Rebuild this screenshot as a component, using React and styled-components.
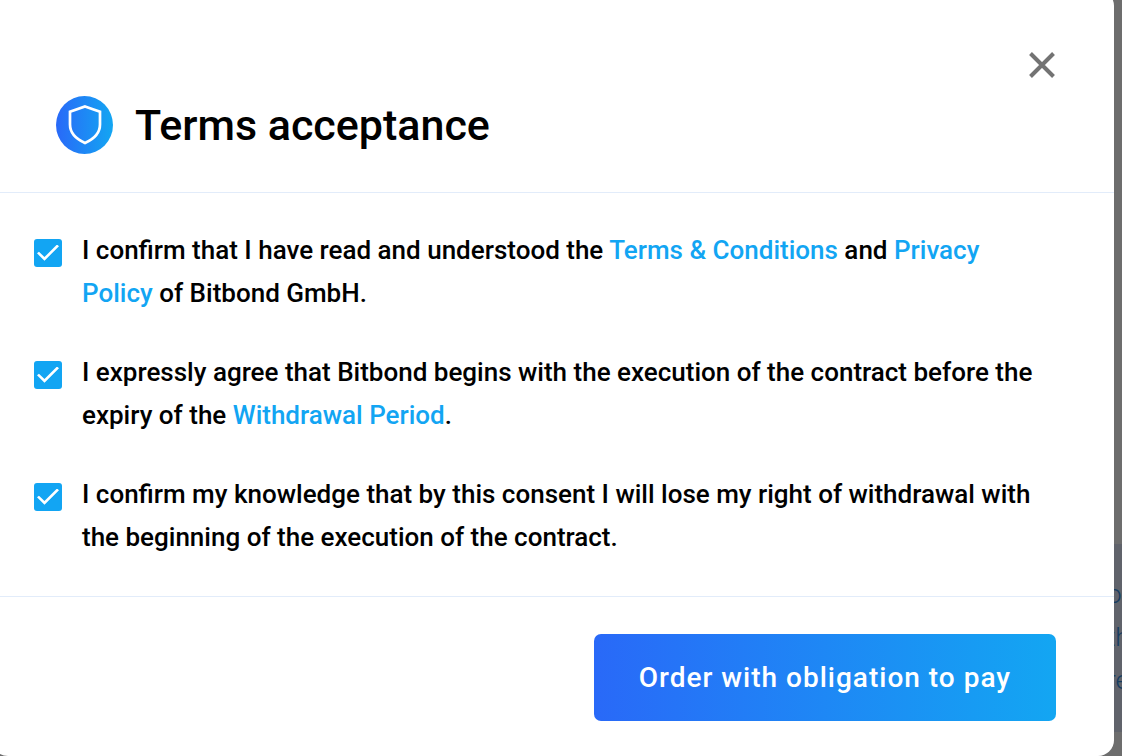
import React from "react";
import styled, { createGlobalStyle } from "styled-components";

const GlobalStyle = createGlobalStyle`
  *, *::before, *::after { box-sizing: border-box; }
  body {
    margin: 0;
    overflow: hidden;
    background: #6d6d6d;
    font-family: Roboto, "Liberation Sans", sans-serif;
  }
`;

const Page = styled.div`
  display: flex;
  min-height: 100vh;
  overflow: hidden;
`;

const Dialog = styled.section`
  position: relative;
  z-index: 1;
  flex: 1;
  display: flex;
  flex-direction: column;
  margin: -10px 0 0 -8px;
  background: #fff;
  border-radius: 16px;
  color: #000;
`;

const Header = styled.header`
  display: flex;
  flex-direction: column;
  padding: 57px 54px 38px 64px;
  border-bottom: 1px solid #e2ecfa;
`;

const CloseButton = styled.button`
  align-self: flex-end;
  display: flex;
  padding: 4px;
  border: 0;
  background: none;
  color: #737373;
  cursor: pointer;
`;

const TitleRow = styled.div`
  display: flex;
  align-items: center;
  gap: 22px;
  margin-top: 13px;
`;

const Badge = styled.span`
  display: flex;
  align-items: center;
  justify-content: center;
  width: 57px;
  height: 58px;
  border-radius: 50%;
  background: linear-gradient(90deg, #2969f8, #13a6f2);
`;

const Title = styled.h1`
  margin: 0;
  font-size: 43px;
  line-height: 58px;
  font-weight: 500;
`;

const Terms = styled.div`
  display: flex;
  flex-direction: column;
  gap: 36px;
  padding: 36px 80px 37px 42px;
`;

const Term = styled.label`
  display: flex;
  align-items: flex-start;
  gap: 20px;
  font-size: 26px;
  line-height: 43px;
  font-weight: 500;
`;

const Checkbox = styled.input`
  appearance: none;
  flex: none;
  width: 28px;
  height: 28px;
  margin: 10px 0 0;
  border-radius: 3px;
  background: #12a5f3;
  display: grid;
  place-items: center;
  cursor: pointer;

  &:checked::before {
    content: "";
    width: 22px;
    height: 17px;
    background: #fff;
    clip-path: polygon(0 52%, 9% 42%, 34% 74%, 91% 0, 100% 11%, 34% 95%);
  }
`;

const Link = styled.a`
  color: #12a5f3;
  text-decoration: none;
`;

const Footer = styled.footer`
  display: flex;
  justify-content: flex-end;
  padding: 37px 58px 35px;
  border-top: 1px solid #e2ecfa;
`;

const OrderButton = styled.button`
  height: 87px;
  padding: 0 45px;
  border: 0;
  border-radius: 7px;
  background: linear-gradient(90deg, #2969f8, #13a6f2);
  color: #fff;
  font: 500 28px/43px Roboto, "Liberation Sans", sans-serif;
  letter-spacing: 1px;
  cursor: pointer;
`;

const Backdrop = styled.aside`
  flex: none;
  width: 24px;
  margin-left: -16px;
  display: flex;
  flex-direction: column;
  justify-content: flex-end;
  overflow: hidden;
  padding-bottom: 24px;
`;

const BackdropPanel = styled.div`
  height: 188px;
  padding: 29px 0 0 9px;
  background: #60636b;
  color: #163c60;
  font-size: 26px;
  line-height: 43px;
  font-weight: 300;
`;

const BackdropLine = styled.div`
  white-space: nowrap;
`;

function ShieldIcon() {
  return (
    <svg width="34" height="40" viewBox="0 0 34 40" fill="none" aria-hidden="true">
      <path
        d="M17 1.500 32 6.800V19.500C32 27.500 26 34 17 38C8 34 2 27.500 2 19.500V6.800Z"
        stroke="#fff"
        strokeWidth="2.700"
      />
    </svg>
  );
}

function CloseIcon() {
  return (
    <svg width="28" height="28" viewBox="0 0 28 28" aria-hidden="true">
      <path d="M2.500 2.500 25.500 25.500M25.500 2.500 2.500 25.500" stroke="currentColor" strokeWidth="4" />
    </svg>
  );
}

export default function App() {
  return (
    <>
      <GlobalStyle />
      <Page>
        <Dialog role="dialog" aria-labelledby="dialog-title">
          <Header>
            <CloseButton type="button" aria-label="Close">
              <CloseIcon />
            </CloseButton>
            <TitleRow>
              <Badge>
                <ShieldIcon />
              </Badge>
              <Title id="dialog-title">Terms acceptance</Title>
            </TitleRow>
          </Header>
          <Terms>
            <Term>
              <Checkbox type="checkbox" defaultChecked />
              <span>
                I confirm that I have read and understood the{" "}
                <Link href="#terms">Terms &amp; Conditions</Link> and{" "}
                <Link href="#privacy">Privacy Policy</Link> of Bitbond GmbH.
              </span>
            </Term>
            <Term>
              <Checkbox type="checkbox" defaultChecked />
              <span>
                I expressly agree that Bitbond begins with the execution of the contract before the
                expiry of the <Link href="#withdrawal">Withdrawal Period</Link>.
              </span>
            </Term>
            <Term>
              <Checkbox type="checkbox" defaultChecked />
              <span>
                I confirm my knowledge that by this consent I will lose my right of withdrawal with
                the beginning of the execution of the contract.
              </span>
            </Term>
          </Terms>
          <Footer>
            <OrderButton type="button">Order with obligation to pay</OrderButton>
          </Footer>
        </Dialog>
        <Backdrop aria-hidden="true">
          <BackdropPanel>
            <BackdropLine>o</BackdropLine>
            <BackdropLine>th</BackdropLine>
            <BackdropLine>re</BackdropLine>
          </BackdropPanel>
        </Backdrop>
      </Page>
    </>
  );
}
